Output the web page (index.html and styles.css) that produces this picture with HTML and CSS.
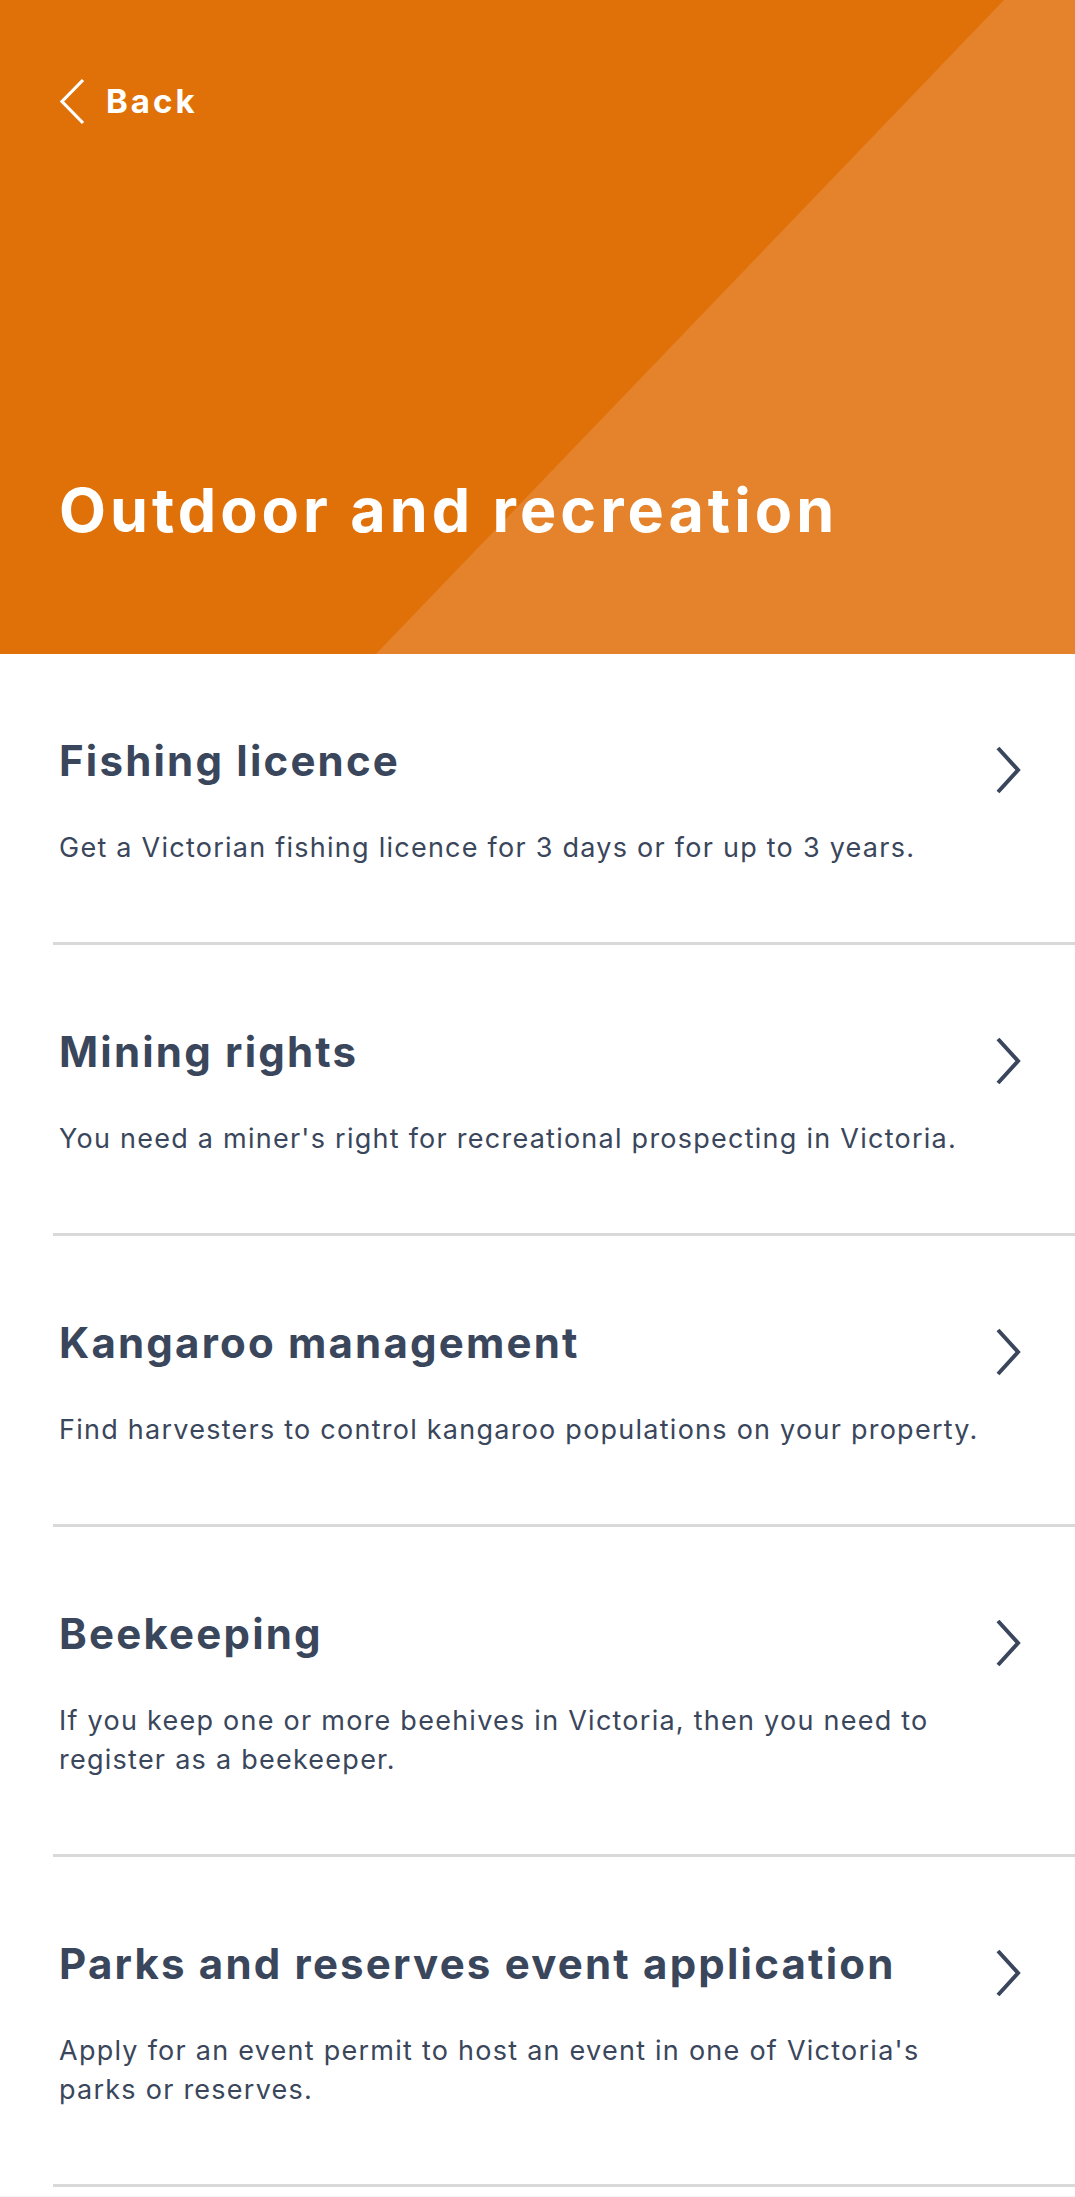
FILE: index.html
```html
<!DOCTYPE html>
<html lang="en">
<head>
<meta charset="utf-8">
<title>Outdoor and recreation</title>
<link rel="stylesheet" href="styles.css">
</head>
<body>
<header class="hero">
  <div class="hero-shade"></div>
  <a class="back" href="#">
    <svg class="back-icon" width="27" height="47" viewBox="0 0 27 47" aria-hidden="true"><polyline points="24,2 3,23.5 24,45" fill="none" stroke="#ffffff" stroke-width="3.2"/></svg>
    <span class="back-label">Back</span>
  </a>
  <h1 class="hero-title">Outdoor and recreation</h1>
</header>
<main class="list">
  <a class="item" href="#">
    <div class="item-head">
      <h2 class="item-title">Fishing licence</h2>
      <svg class="chev" width="27" height="48" viewBox="0 0 27 48" aria-hidden="true"><polyline points="3,2 23,24 3,46" fill="none" stroke="#3a465b" stroke-width="4"/></svg>
    </div>
    <p class="item-desc">Get a Victorian fishing licence for 3 days or for up to 3 years.</p>
  </a>
  <a class="item" href="#">
    <div class="item-head">
      <h2 class="item-title">Mining rights</h2>
      <svg class="chev" width="27" height="48" viewBox="0 0 27 48" aria-hidden="true"><polyline points="3,2 23,24 3,46" fill="none" stroke="#3a465b" stroke-width="4"/></svg>
    </div>
    <p class="item-desc">You need a miner's right for recreational prospecting in Victoria.</p>
  </a>
  <a class="item" href="#">
    <div class="item-head">
      <h2 class="item-title">Kangaroo management</h2>
      <svg class="chev" width="27" height="48" viewBox="0 0 27 48" aria-hidden="true"><polyline points="3,2 23,24 3,46" fill="none" stroke="#3a465b" stroke-width="4"/></svg>
    </div>
    <p class="item-desc">Find harvesters to control kangaroo populations on your property.</p>
  </a>
  <a class="item" href="#">
    <div class="item-head">
      <h2 class="item-title">Beekeeping</h2>
      <svg class="chev" width="27" height="48" viewBox="0 0 27 48" aria-hidden="true"><polyline points="3,2 23,24 3,46" fill="none" stroke="#3a465b" stroke-width="4"/></svg>
    </div>
    <p class="item-desc">If you keep one or more beehives in Victoria, then you need to register as a beekeeper.</p>
  </a>
  <a class="item" href="#">
    <div class="item-head">
      <h2 class="item-title">Parks and reserves event application</h2>
      <svg class="chev" width="27" height="48" viewBox="0 0 27 48" aria-hidden="true"><polyline points="3,2 23,24 3,46" fill="none" stroke="#3a465b" stroke-width="4"/></svg>
    </div>
    <p class="item-desc">Apply for an event permit to host an event in one of Victoria's parks or reserves.</p>
  </a>
</main>
</body>
</html>
```

FILE: styles.css
```css
* { box-sizing: border-box; }

html, body {
  margin: 0;
  padding: 0;
}

body {
  background: #f4f4f4;
  font-family: "Inter", "Liberation Sans", sans-serif;
  color: #3a465b;
}

.hero {
  position: relative;
  height: 654px;
  background: #e07109;
  overflow: hidden;
  display: flex;
  flex-direction: column;
  padding: 78px 59px 0;
}

.hero-shade {
  position: absolute;
  inset: 0;
  background: #e4832b;
  clip-path: polygon(1004px 0, 1075px 0, 1075px 654px, 376px 654px);
}

.back {
  position: relative;
  display: flex;
  align-items: center;
  gap: 20px;
  color: #ffffff;
  text-decoration: none;
  height: 46px;
}

.back-icon { display: block; }

.back-label {
  font-size: 33px;
  font-weight: 700;
  line-height: 1;
  letter-spacing: 3px;
}

.hero-title {
  position: relative;
  margin: 350px 0 0;
  color: #ffffff;
  font-size: 61px;
  font-weight: 700;
  line-height: 72px;
  letter-spacing: 4px;
}

.list {
  background: #ffffff;
  padding-bottom: 9px;
}

.item {
  display: block;
  margin-left: 53px;
  padding: 82px 53px 75px 6px;
  border-bottom: 3px solid #d9d9d9;
  text-decoration: none;
  color: #3a465b;
}

.item-head {
  display: flex;
  align-items: center;
  justify-content: space-between;
  height: 50px;
}

.item-title {
  margin: 0;
  font-size: 42px;
  font-weight: 700;
  line-height: 50px;
  letter-spacing: 2.2px;
}

.chev {
  display: block;
  flex: none;
  margin-top: 18px;
}

.item-desc {
  margin: 42px 0 0;
  max-width: 946px;
  font-size: 27px;
  font-weight: 400;
  line-height: 39px;
  letter-spacing: 1.25px;
}
```
